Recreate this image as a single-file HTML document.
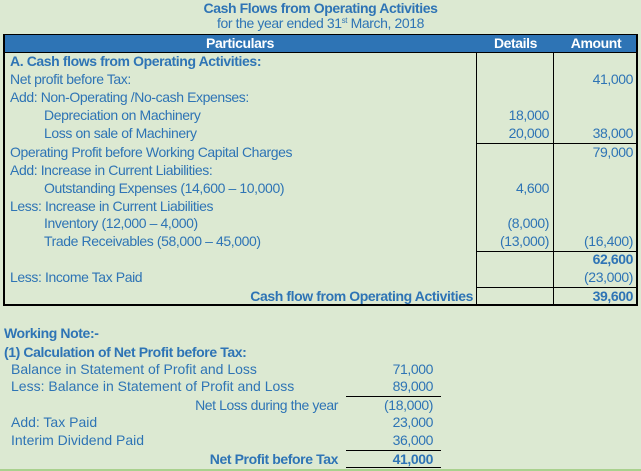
<!DOCTYPE html>
<html><head><style>
body{margin:0;width:641px;height:471px;background:#dce9d2;position:relative;overflow:hidden;font-family:"Liberation Sans",sans-serif;color:#2e74b5;font-size:14px}
.t{position:absolute;white-space:nowrap;line-height:16px;letter-spacing:-0.4px}
.r{text-align:right}
.b{font-weight:bold}
.l{position:absolute;background:#000}
.w{letter-spacing:0}
sup{line-height:0;vertical-align:5px}
</style></head><body>
<div class="t" style="left:0;width:641px;text-align:center;top:0px;font-weight:bold;font-size:14px">Cash Flows from Operating Activities</div>
<div class="t" style="left:0;width:641px;text-align:center;top:15px;font-size:14px">for the year ended 31<sup style="font-size:8px">st</sup> March, 2018</div>
<div style="position:absolute;left:3px;top:34px;width:635px;height:18px;background:#2e74b5"></div>
<div class="t b" style="left:3px;width:474px;text-align:center;top:35px;color:#fff">Particulars</div>
<div class="t b" style="left:477px;width:77px;text-align:center;top:35px;color:#fff">Details</div>
<div class="t b" style="left:554px;width:84px;text-align:center;top:35px;color:#fff">Amount</div>
<div class="l" style="left:3px;top:34px;width:635px;height:1px"></div>
<div class="l" style="left:3px;top:34px;width:2px;height:271px"></div>
<div class="l" style="left:636px;top:34px;width:2px;height:271px"></div>
<div class="l" style="left:3px;top:52px;width:635px;height:1px"></div>
<div class="l" style="left:476px;top:52px;width:1px;height:253px"></div>
<div class="l" style="left:553px;top:52px;width:1px;height:253px"></div>
<div class="l" style="left:476px;top:143px;width:162px;height:1px"></div>
<div class="l" style="left:476px;top:251px;width:162px;height:1px"></div>
<div class="l" style="left:476px;top:287px;width:162px;height:1px"></div>
<div class="l" style="left:3px;top:304px;width:635px;height:2px"></div>

<div class="t b" style="left:10px;top:53px">A. Cash flows from Operating Activities:</div>
<div class="t" style="left:10px;top:71px">Net profit before Tax:</div>
<div class="t r" style="right:8px;top:71px">41,000</div>
<div class="t" style="left:10px;top:89px">Add: Non-Operating /No-cash Expenses:</div>
<div class="t" style="left:44px;top:107px">Depreciation on Machinery</div>
<div class="t r" style="right:92px;top:107px">18,000</div>
<div class="t" style="left:44px;top:125px">Loss on sale of Machinery</div>
<div class="t r" style="right:92px;top:125px">20,000</div>
<div class="t r" style="right:8px;top:125px">38,000</div>
<div class="t" style="left:10px;top:144px">Operating Profit before Working Capital Charges</div>
<div class="t r" style="right:8px;top:144px">79,000</div>
<div class="t" style="left:10px;top:162px">Add: Increase in Current Liabilities:</div>
<div class="t" style="left:44px;top:180px">Outstanding Expenses (14,600 – 10,000)</div>
<div class="t r" style="right:92px;top:180px">4,600</div>
<div class="t" style="left:10px;top:198px">Less: Increase in Current Liabilities</div>
<div class="t" style="left:44px;top:215px">Inventory (12,000 – 4,000)</div>
<div class="t r" style="right:92px;top:215px">(8,000)</div>
<div class="t" style="left:44px;top:233px">Trade Receivables (58,000 – 45,000)</div>
<div class="t r" style="right:92px;top:233px">(13,000)</div>
<div class="t r" style="right:8px;top:233px">(16,400)</div>
<div class="t r b" style="right:8px;top:251px">62,600</div>
<div class="t" style="left:10px;top:269px">Less: Income Tax Paid</div>
<div class="t r" style="right:8px;top:269px">(23,000)</div>
<div class="t r b" style="right:168px;top:288px">Cash flow from Operating Activities</div>
<div class="t r b" style="right:8px;top:288px">39,600</div>

<div class="t b" style="left:4px;top:325px">Working Note:-</div>
<div class="t b" style="left:4px;top:344px">(1) Calculation of Net Profit before Tax:</div>
<div class="t w" style="left:11px;top:361px">Balance in Statement of Profit and Loss</div>
<div class="t r" style="right:208px;top:361px">71,000</div>
<div class="t w" style="left:11px;top:378px">Less: Balance in Statement of Profit and Loss</div>
<div class="t r" style="right:208px;top:378px">89,000</div>
<div class="l" style="left:346px;top:396px;width:95px;height:1px"></div>
<div class="t r" style="right:303px;top:397px">Net Loss during the year</div>
<div class="t r" style="right:208px;top:397px">(18,000)</div>
<div class="t w" style="left:11px;top:414px">Add: Tax Paid</div>
<div class="t r" style="right:208px;top:414px">23,000</div>
<div class="t w" style="left:11px;top:432px">Interim Dividend Paid</div>
<div class="t r" style="right:208px;top:432px">36,000</div>
<div class="l" style="left:346px;top:450px;width:95px;height:1px"></div>
<div class="t r b" style="right:303px;top:451px">Net Profit before Tax</div>
<div class="t r b" style="right:208px;top:451px">41,000</div>
<div class="l" style="left:346px;top:467px;width:95px;height:1px"></div>
<div style="position:absolute;left:0;top:469px;width:641px;height:2px;background:#a9d18e"></div>
</body></html>
